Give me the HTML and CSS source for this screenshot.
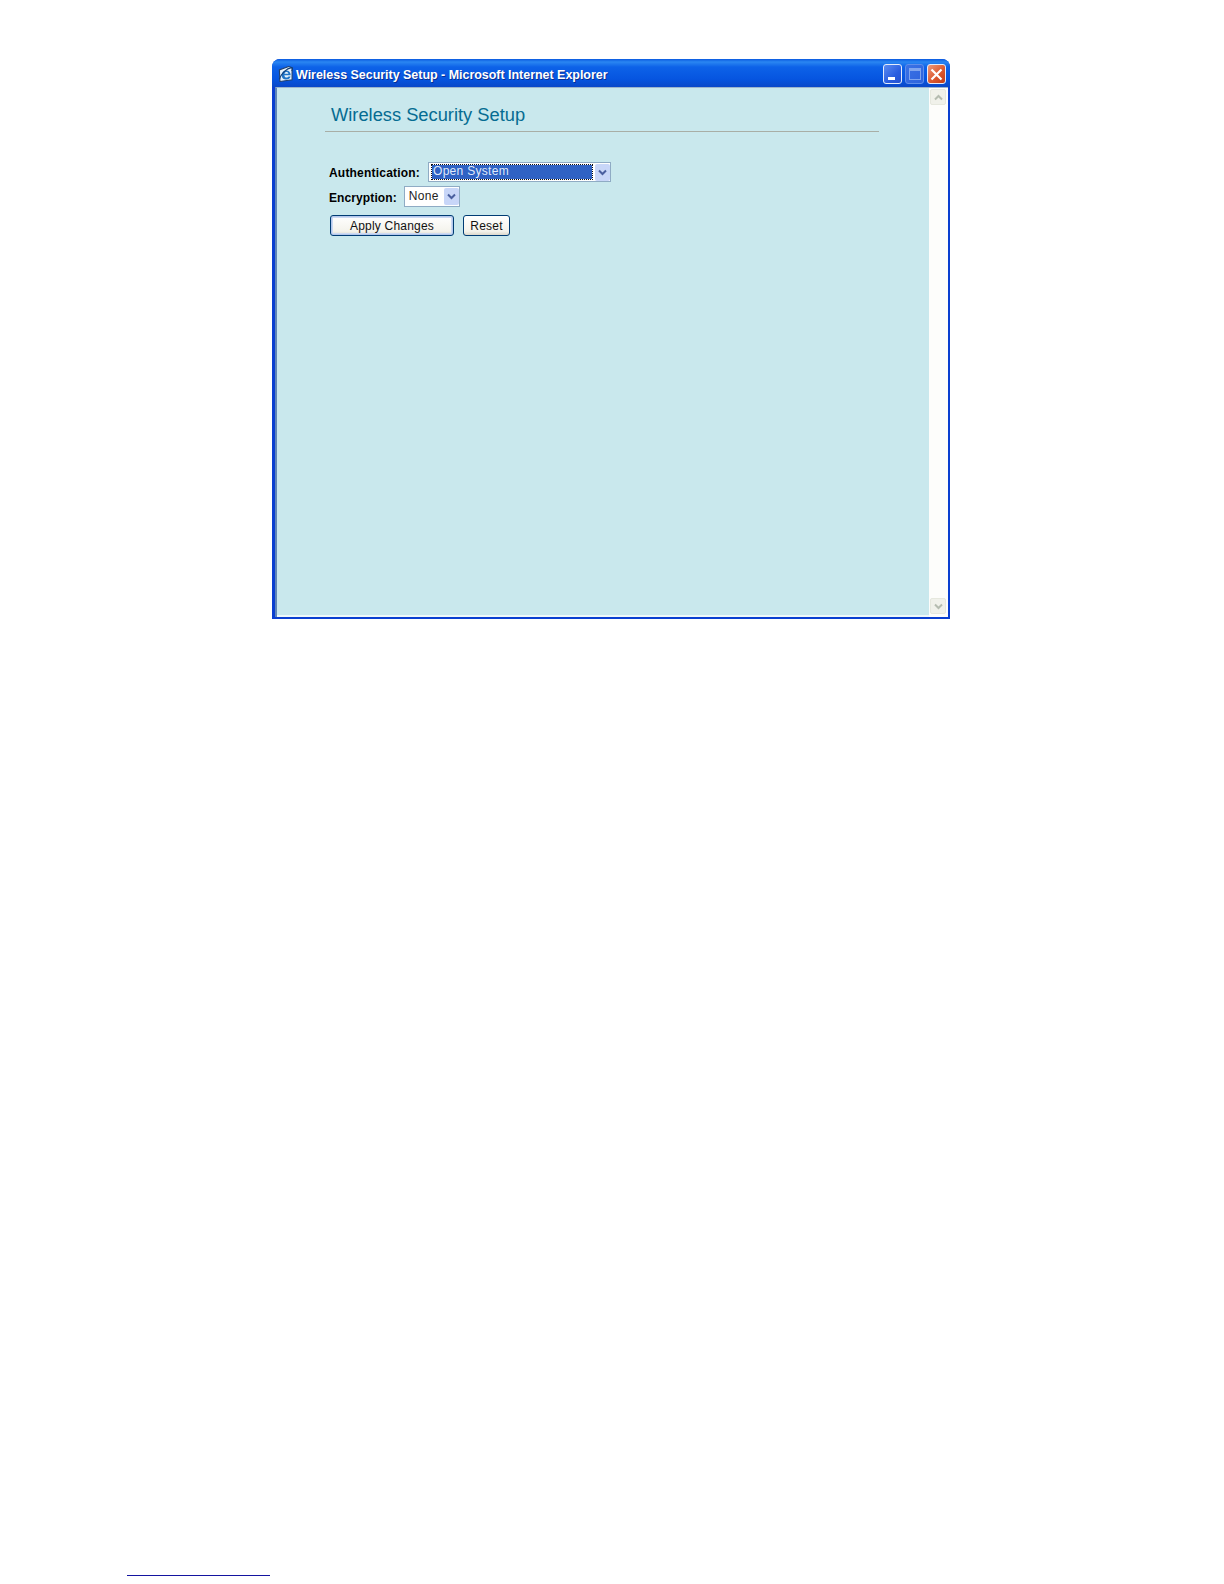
FILE: index.html
```html
<!DOCTYPE html>
<html lang="en">
<head>
<meta charset="UTF-8" />
<meta name="viewport" content="width=device-width, initial-scale=1" />
<title>Wireless Security Setup</title>
<link rel="stylesheet" href="styles.css">
</head>
<body>
<div class="window">
  <div class="title-bar">
    <svg class="ie-icon" width="16" height="16" viewBox="2 1 13 14.500">
      <path d="M2.500 4.500L11 1.500l3 1v11l-11 1.500z" fill="#e9f3fb" stroke="#20406f" stroke-width="1"/>
      <path d="M4.500 9.500C4.500 6.800 6.500 5 8.800 5s4 1.800 4 4.400H7c.1 1.300 1 2.100 2 2.100.8 0 1.400-.4 1.700-1h2c-.5 1.700-2 2.800-3.800 2.800-2.500 0-4.400-1.900-4.400-3.800zM7.100 8h3.600C10.500 7 9.800 6.500 8.900 6.500S7.400 7 7.100 8z" fill="#1f74c8"/>
      <path d="M2.500 13C4 8 9 3 13.500 2.500c1.200 0 1 1.500.2 3" fill="none" stroke="#123f78" stroke-width="1"/>
    </svg>
    <span class="title-text">Wireless Security Setup - Microsoft Internet Explorer</span>
    <div class="title-buttons">
      <div class="win-btn"><span class="min-glyph"></span></div>
      <div class="win-btn disabled"><span class="max-glyph"></span></div>
      <div class="win-btn close">
        <svg width="13" height="13" viewBox="0 0 13 13"><path d="M1.500 1.500l10 10M11.500 1.500l-10 10" stroke="#fff" stroke-width="2.200" fill="none"/></svg>
      </div>
    </div>
  </div>
  <div class="client">
    <main class="content">
      <h1 class="page-title">Wireless Security Setup</h1>
      <form class="setup-form">
        <div class="form-row auth-row">
          <label>Authentication:</label>
          <div class="fake-select wide">
            <span class="select-value selected">Open System</span>
            <span class="select-arrow"><svg width="9" height="7" viewBox="0 0 9 7"><path d="M1 1.500l3.500 3.500L8 1.500" fill="none" stroke="#4a5f9f" stroke-width="2"/></svg></span>
          </div>
        </div>
        <div class="form-row enc-row">
          <label>Encryption:</label>
          <div class="fake-select narrow">
            <span class="select-value">None</span>
            <span class="select-arrow"><svg width="9" height="7" viewBox="0 0 9 7"><path d="M1 1.500l3.500 3.500L8 1.500" fill="none" stroke="#4a5f9f" stroke-width="2"/></svg></span>
          </div>
        </div>
        <div class="button-row">
          <button type="button" class="xp-btn default">Apply Changes</button>
          <button type="button" class="xp-btn">Reset</button>
        </div>
      </form>
    </main>
    <div class="scrollbar">
      <span class="scroll-btn"><svg width="9" height="7" viewBox="0 0 9 7"><path d="M1 5.500L4.500 2 8 5.500" fill="none" stroke="#b5bcb0" stroke-width="2"/></svg></span>
      <span class="scroll-btn"><svg width="9" height="7" viewBox="0 0 9 7"><path d="M1 1.500L4.500 5 8 1.500" fill="none" stroke="#b5bcb0" stroke-width="2"/></svg></span>
    </div>
  </div>
</div>
<div class="footnote-rule"></div>
</body>
</html>
```

FILE: styles.css
```css
/* Basic reset */
* {
  box-sizing: border-box;
}

html, body {
  margin: 0;
  background: #fff;
}

body {
  height: 1584px;
  overflow: hidden;
  padding-top: 59px;
  font-family: "Liberation Sans", Arial, sans-serif;
}

/* Browser window */
.window {
  width: 678px;
  height: 560px;
  margin-left: 272px;
  display: flex;
  flex-direction: column;
  background: #0a3fd0;
  border-radius: 8px 8px 0 0;
  padding: 0 2px 2px 3px;
}

.title-bar {
  height: 28px;
  flex: none;
  display: flex;
  align-items: center;
  margin: 0 -2px 0 -3px;
  padding: 2px 4px 0 6px;
  border-radius: 8px 8px 0 0;
  background: linear-gradient(to bottom, #0a5ae0 0, #2a86f2 3px, #0d62e8 8px, #0655e0 20px, #0a48c8 28px);
}

.ie-icon {
  flex: none;
}

.title-text {
  margin: 2px 0 0 2px;
  color: #fff;
  font-size: 12.5px;
  font-weight: bold;
  letter-spacing: -0.03px;
  white-space: nowrap;
  text-shadow: 1px 1px 0 #0a2f90;
}

.title-buttons {
  margin-left: auto;
  display: flex;
  gap: 3px;
}

.win-btn {
  width: 19px;
  height: 20px;
  display: flex;
  align-items: center;
  justify-content: center;
  position: relative;
  border: 1px solid #e4ecfb;
  border-radius: 3px;
  background: linear-gradient(135deg, #5c8cf0, #2a5ee0 60%, #2450d0);
}

.win-btn.disabled {
  border-color: #5f8eea;
  background: linear-gradient(135deg, #3a72e6, #2e63dc);
}

.win-btn.close {
  background: linear-gradient(135deg, #ee9a7c, #dc5a30 55%, #c23c18);
}

.min-glyph {
  position: absolute;
  left: 4px;
  bottom: 3px;
  width: 7px;
  height: 3px;
  background: #fff;
}

.max-glyph {
  width: 12px;
  height: 12px;
  border: 1px solid #7fa4ee;
  border-top-width: 3px;
}

/* Page area */
.client {
  flex: 1;
  display: flex;
  min-height: 0;
  border-top: 1px solid #9db5cc;
  border-left: 2px solid #5f86b8;
}

.content {
  flex: 1;
  padding: 15px 0 0 48px;
  background: #c9e8ed;
  border-bottom: 2px solid #eef8fa;
}

.page-title {
  width: 554px;
  height: 29px;
  margin: 0;
  padding-left: 6px;
  border-bottom: 1px solid #a8aea6;
  color: #056c92;
  font-size: 18.3px;
  font-weight: normal;
  line-height: 24px;
}

.setup-form {
  padding: 30px 0 0 5px;
}

.form-row {
  display: flex;
  align-items: center;
  gap: 7px;
}

.form-row label {
  margin-left: -1px;
  padding-top: 2px;
  font-size: 12px;
  font-weight: bold;
  letter-spacing: 0.2px;
  color: #000;
}

.auth-row {
  height: 20px;
  gap: 8px;
}

.enc-row {
  height: 21px;
  margin-top: 4px;
}

.enc-row label {
  letter-spacing: 0.1px;
}

.fake-select {
  height: 100%;
  display: flex;
  align-items: center;
  padding: 2px 0 2px 3px;
  border: 1px solid #8fabc4;
  background: #fff;
  font-size: 12px;
}

.fake-select.wide {
  width: 183px;
}

.fake-select.narrow {
  width: 56px;
}

.select-value {
  flex: 1;
  height: 14px;
  padding: 0 1px;
  line-height: 13px;
  letter-spacing: 0.3px;
  color: #222;
}

.select-value.selected {
  background: #2f62c4;
  color: #dfe8fa;
  outline: 1px dotted #111;
}

.select-arrow {
  width: 15px;
  height: 17px;
  margin-left: 3px;
  display: flex;
  align-items: center;
  justify-content: center;
  border-radius: 2px;
  background: #c8d6f8;
}

.button-row {
  display: flex;
  gap: 9px;
  margin-top: 8px;
}

.xp-btn {
  width: 47px;
  height: 21px;
  padding: 0;
  border: 1px solid #003c74;
  border-radius: 3px;
  background: linear-gradient(to bottom, #fff, #f4f3ec 80%, #dcd8cc);
  color: #111;
  font-family: inherit;
  font-size: 12px;
  letter-spacing: 0.2px;
}

.xp-btn.default {
  width: 124px;
  box-shadow: inset 0 0 0 1px #b4c8ec, inset 0 0 0 2px #cddaf3;
}

/* Disabled scrollbar */
.scrollbar {
  width: 19px;
  flex: none;
  display: flex;
  flex-direction: column;
  justify-content: space-between;
  background: #fdfdfb;
  padding: 1px 2px 3px 1px;
}

.scroll-btn {
  height: 16px;
  display: flex;
  align-items: center;
  justify-content: center;
  border: 1px solid #e6e8de;
  border-radius: 2px;
  background: #f0f1ea;
}

/* Footnote rule at the foot of the page */
.footnote-rule {
  width: 143px;
  height: 1px;
  margin: 956px 0 0 127px;
  background: #1414a0;
}
```
